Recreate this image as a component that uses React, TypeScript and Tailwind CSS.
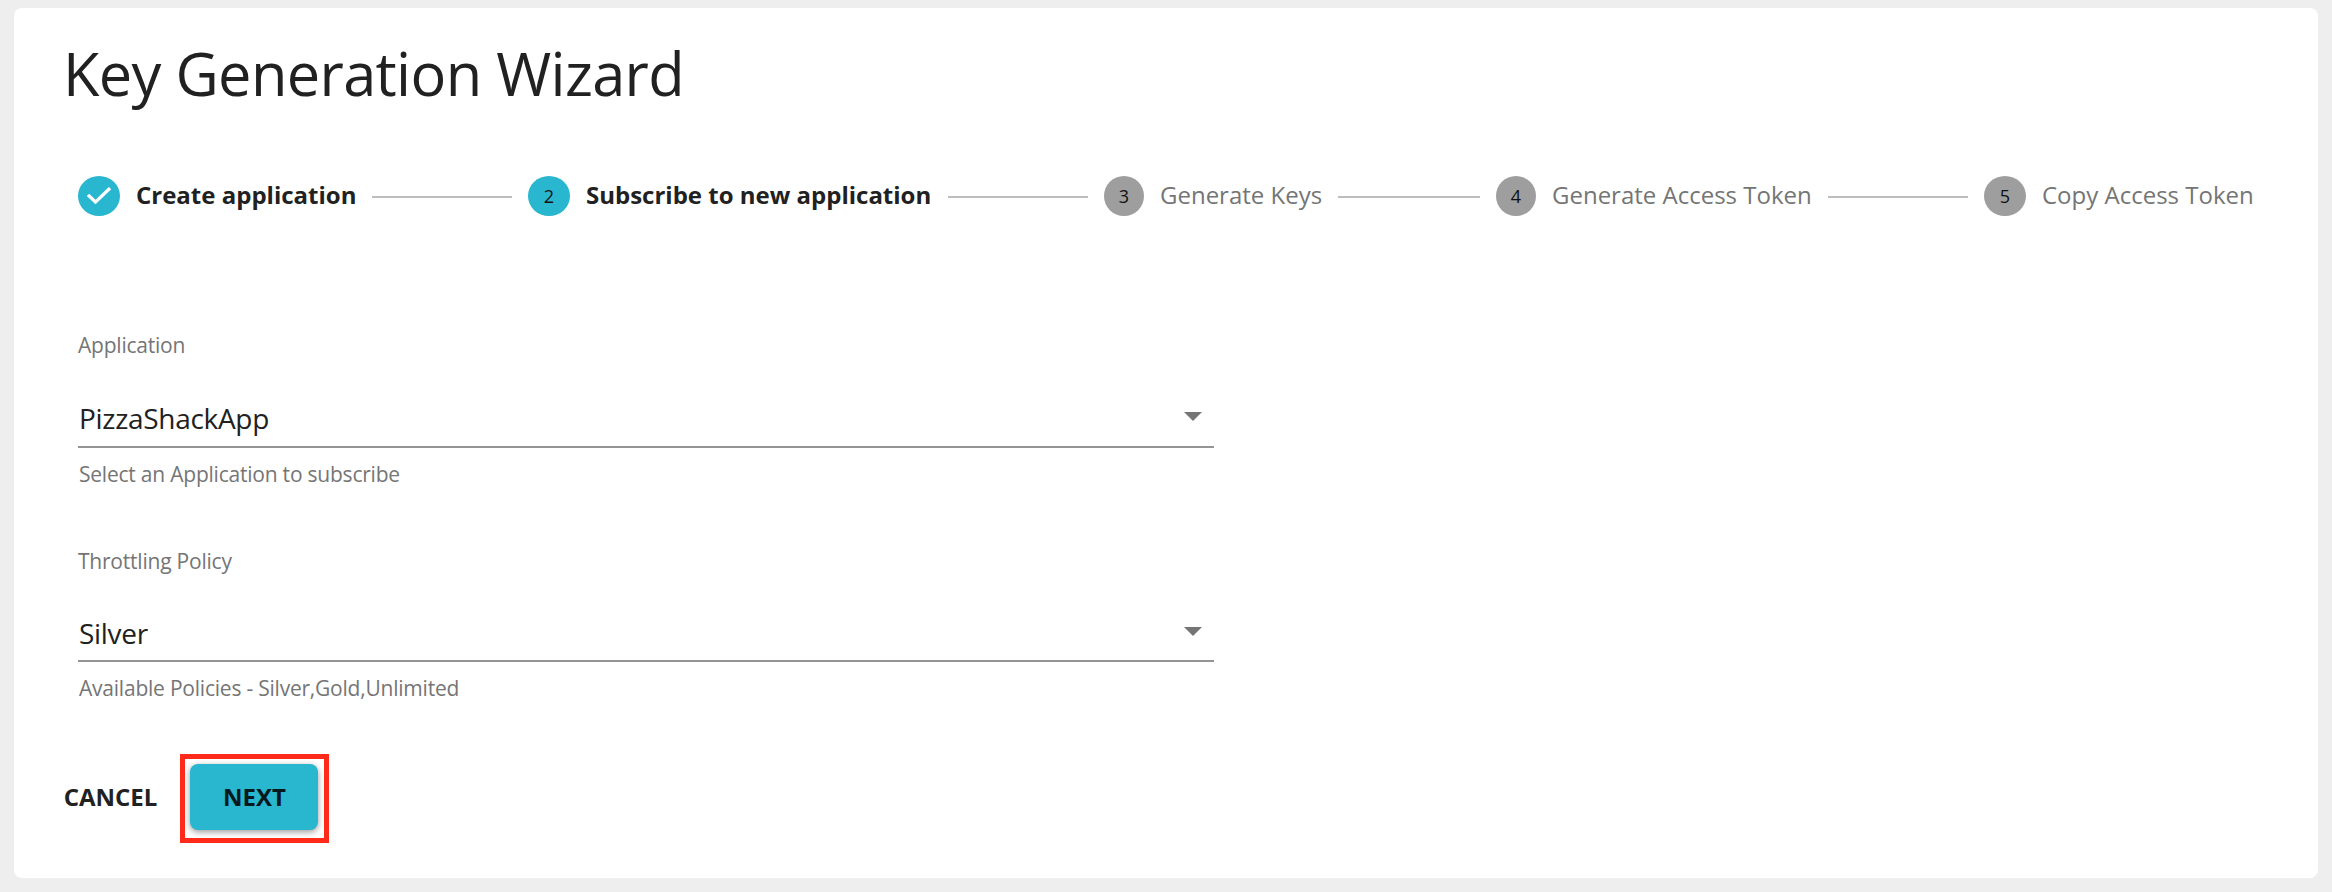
import React from 'react';

const steps = [
  { label: 'Create application', state: 'done', icon: 'w-[42px]', width: 'w-[220px]', line: 'w-[140px]' },
  { label: 'Subscribe to new application', state: 'active', icon: 'w-[42px]', width: 'w-[346px]', line: 'w-[140px]' },
  { label: 'Generate Keys', state: 'todo', icon: 'w-10', width: 'w-[162px]', line: 'w-[142px]' },
  { label: 'Generate Access Token', state: 'todo', icon: 'w-10', width: 'w-[260px]', line: 'w-[140px]' },
  { label: 'Copy Access Token', state: 'todo', icon: 'w-[42px]', width: 'w-[212px]', line: '' },
];

function StepIcon({ n, state, width }: { n: number; state: string; width: string }) {
  if (state === 'done') {
    return (
      <svg viewBox="0 0 24 24" preserveAspectRatio="none" className={`h-10 shrink-0 fill-[#29b6cf] ${width}`}>
        <path d="M12 0a12 12 0 1 0 0 24 12 12 0 0 0 0-24zm-2 17l-5-5 1.4-1.4 3.6 3.6 7.6-7.6L19 8l-9 9z" />
      </svg>
    );
  }
  return (
    <div
      className={`flex h-10 shrink-0 items-center justify-center rounded-[50%] pt-px text-[18px] text-[#111111] ${width} ${
        state === 'active' ? 'bg-[#29b6cf]' : 'bg-[#9e9e9e]'
      }`}
    >
      {n}
    </div>
  );
}

function Field({ label, value, help, row }: { label: string; value: string; help: string; row: string }) {
  return (
    <div className="w-[1136px]">
      <div className="h-[30px] text-[21px] leading-[30px] tracking-[-0.22px] text-[#757575]">{label}</div>
      <div className={`mt-[30px] flex items-center justify-between border-b-2 border-[#949494] pr-3 pl-px text-[28px] text-[#212121] ${row}`}>
        <span className="tracking-[-0.3px]">{value}</span>
        <svg viewBox="0 0 18 9" className="mb-[3px] h-[9px] w-[18px] fill-[#757575]">
          <path d="M0 0h18l-9 9z" />
        </svg>
      </div>
      <div className="mt-[11px] h-[31px] pl-px text-[21px] leading-[30px] tracking-[-0.22px] text-[#757575]">{help}</div>
    </div>
  );
}

export default function App() {
  return (
    <div className="h-[892px] bg-[#eeeeee] px-[14px] pt-2 font-['Open_Sans',sans-serif]">
      <main className="h-[870px] rounded-lg bg-white pl-[50px]">
        <h1 className="-ml-px pt-6 text-[59.5px] leading-[82px] tracking-[-0.65px] text-[#212121]">
          Key Generation Wizard
        </h1>
        <div className="mt-[62px] flex items-center pl-[14px]">
          {steps.map((s, i) => (
            <React.Fragment key={s.label}>
              <div className="flex items-center gap-4">
                <StepIcon n={i + 1} state={s.state} width={s.icon} />
                <span
                  className={`pb-[2px] text-[24px] leading-[38px] whitespace-nowrap ${s.width} ${
                    s.state === 'todo' ? 'text-[#757575]' : 'font-bold text-[#212121]'
                  }`}
                >
                  {s.label}
                </span>
              </div>
              {s.line && <div className={`mx-4 mt-[2px] h-[2px] bg-[#bdbdbd] ${s.line}`} />}
            </React.Fragment>
          ))}
        </div>
        <div className="mt-[114px] flex flex-col gap-14 pl-[14px]">
          <Field label="Application" value="PizzaShackApp" help="Select an Application to subscribe" row="h-[58px] pb-px" />
          <Field label="Throttling Policy" value="Silver" help="Available Policies - Silver,Gold,Unlimited" row="h-[56px]" />
        </div>
        <div className="mt-[50px] flex items-center text-[24px] font-bold text-[#212121]">
          <button className="-ml-px w-[95px] pb-1">CANCEL</button>
          <div className="ml-[22px] h-[89px] w-[149px] border-[5px] border-[#ff2a1a] p-[5px]">
            <button className="h-[66px] w-[128px] rounded-lg bg-[#29b6cf] pb-px pl-px text-[#06191d] shadow-[0_2px_6px_rgba(0,0,0,0.4)]">
              NEXT
            </button>
          </div>
        </div>
      </main>
    </div>
  );
}
